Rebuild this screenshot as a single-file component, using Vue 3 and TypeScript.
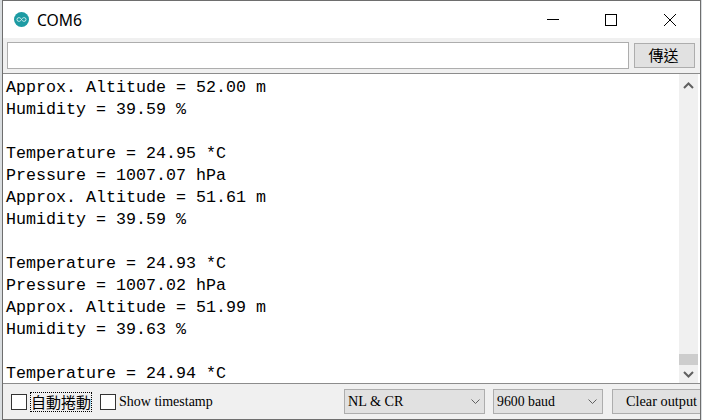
<script setup lang="ts">
const lines: string[] = [
  'Approx. Altitude = 52.00 m',
  'Humidity = 39.59 %',
  '',
  'Temperature = 24.95 *C',
  'Pressure = 1007.07 hPa',
  'Approx. Altitude = 51.61 m',
  'Humidity = 39.59 %',
  '',
  'Temperature = 24.93 *C',
  'Pressure = 1007.02 hPa',
  'Approx. Altitude = 51.99 m',
  'Humidity = 39.63 %',
  '',
  'Temperature = 24.94 *C',
]
</script>

<template>
  <div class="desk">
    <div class="win">
      <header class="title">
        <svg class="logo" width="15" height="15" viewBox="0 0 16 16">
          <circle cx="8" cy="8" r="8" fill="#1d9ba3" />
          <path d="M8 8c-1-1.6-1.9-2-2.8-2a2 2 0 0 0 0 4c.9 0 1.8-.4 2.8-2zm0 0c1-1.6 1.9-2 2.8-2a2 2 0 0 1 0 4c-.9 0-1.8-.4-2.8-2z" fill="none" stroke="#d8eff0" stroke-width="1" />
        </svg>
        <span class="name">COM6</span>
        <div class="controls">
          <svg width="12" height="12" viewBox="0 0 12 12"><path d="M0 5.5h12" stroke="#000" stroke-width="1" /></svg>
          <svg width="12" height="12" viewBox="0 0 12 12"><rect x=".5" y=".5" width="11" height="11" fill="none" stroke="#000" /></svg>
          <svg class="x" width="12" height="12" viewBox="0 0 12 12"><path d="M0 0l12 12M12 0L0 12" stroke="#000" stroke-width="1" /></svg>
        </div>
      </header>

      <div class="send">
        <input class="field" type="text" />
        <button class="sendbtn">傳送</button>
      </div>

      <div class="output">
        <div class="text">
          <div v-for="(l, i) in lines" :key="i" class="line">{{ l }}</div>
        </div>
        <div class="scroll">
          <svg class="arrow up" width="11" height="7" viewBox="0 0 11 7"><path d="M1 6l4.5-4.5L10 6" fill="none" stroke="#606060" stroke-width="2" /></svg>
          <div class="track"><div class="thumb"></div></div>
          <svg class="arrow" width="11" height="7" viewBox="0 0 11 7"><path d="M1 1l4.5 4.5L10 1" fill="none" stroke="#606060" stroke-width="2" /></svg>
        </div>
      </div>

      <footer class="bar">
        <label class="check"><span class="box"></span><span class="zh focus">自動捲動</span></label>
        <label class="check second"><span class="box"></span><span class="serif">Show timestamp</span></label>
        <div class="sel sel1"><span>NL &amp; CR</span><svg width="9" height="5" viewBox="0 0 9 5"><path d="M.5 .5l4 4 4-4" fill="none" stroke="#606060" /></svg></div>
        <div class="sel sel2"><span>9600 baud</span><svg width="9" height="5" viewBox="0 0 9 5"><path d="M.5 .5l4 4 4-4" fill="none" stroke="#606060" /></svg></div>
        <div class="clear"><span>Clear output</span></div>
      </footer>
    </div>
  </div>
</template>

<style>
html, body { margin: 0; padding: 0; background: #fff; overflow: hidden; }
</style>

<style scoped>
.desk {
  width: 702px;
  height: 420px;
  box-sizing: border-box;
  padding: 0 0 0 2px;
  background: #d9dde0;
}
.win {
  width: 699px;
  height: 420px;
  box-sizing: border-box;
  border: 1px solid #6e6e6e;
  background: #f0f0f0;
  display: flex;
  flex-direction: column;
}
.title {
  height: 37px;
  flex: none;
  background: #fff;
  display: flex;
  align-items: center;
  padding: 0 24px 0 11px;
  font-family: "Noto Sans", "Liberation Sans", sans-serif;
}
.logo { flex: none; }
.name { margin-left: 8px; font-size: 15.7px; color: #000; }
.controls { margin-left: auto; display: flex; gap: 46px; }
.x { margin-left: 1px; }
.send {
  height: 36px;
  flex: none;
  box-sizing: border-box;
  display: flex;
  align-items: flex-start;
  padding: 4px 0 0 4px;
  border-bottom: 1px solid #8c8c8c;
}
.field {
  width: 622px;
  height: 27px;
  box-sizing: border-box;
  border: 1px solid #adadad;
  background: #fff;
  padding: 0;
  outline: none;
}
.sendbtn {
  margin: 1px 0 0 5px;
  width: 61px;
  height: 25px;
  box-sizing: border-box;
  border: 1px solid #adadad;
  background: #e1e1e1;
  padding: 0 2px 2px 0;
  font: 15px/20px "Noto Sans CJK TC", sans-serif;
  color: #000;
}
.output {
  height: 309px;
  flex: none;
  display: flex;
  background: #fff;
  overflow: hidden;
}
.text {
  flex: 1;
  padding: 3px 0 0 3px;
  font: 16.67px/22px "Liberation Mono", monospace;
  color: #000;
  white-space: pre;
  overflow: hidden;
}
.line { height: 22px; }
.scroll {
  width: 19px;
  flex: none;
  margin-right: 2px;
  background: #f0f0f0;
  display: flex;
  flex-direction: column;
  align-items: center;
}
.arrow { flex: none; margin: 6px 0 5px; }
.arrow.up { margin: 8px 0 5px; }
.track { flex: 1; width: 100%; display: flex; flex-direction: column; justify-content: flex-end; }
.thumb { height: 11px; background: #cdcdcd; }
.bar {
  flex: 1;
  box-sizing: border-box;
  border-top: 1px solid #8c8c8c;
  display: flex;
  align-items: center;
  padding-left: 8px;
  font-family: "Liberation Serif", serif;
  color: #000;
}
.check { display: flex; align-items: center; }
.box {
  width: 14px;
  height: 14px;
  border: 1px solid #333;
  background: #fff;
  flex: none;
}
.zh {
  margin-left: 4px;
  font: 15px/18px "Noto Sans CJK TC", sans-serif;
}
.focus { outline: 1px dotted #000; outline-offset: 0; }
.second { margin-left: 9px; }
.serif { margin-left: 3px; font-size: 14px; }
.sel {
  box-sizing: border-box;
  height: 25px;
  border: 1px solid #adadad;
  background: #e1e1e1;
  display: flex;
  align-items: center;
  justify-content: space-between;
  padding: 0 4px 0 3px;
  font-size: 14.2px;
}
.sel1 { width: 141px; margin-left: auto; }
.sel2 { width: 110px; margin-left: 8px; padding-right: 5px; font-size: 13.8px; }
.clear {
  box-sizing: border-box;
  width: 88px;
  height: 25px;
  margin-left: 9px;
  border: 1px solid #adadad;
  border-right: none;
  background: #e1e1e1;
  display: flex;
  align-items: center;
  padding-left: 13px;
  font-size: 14.3px;
  white-space: nowrap;
  overflow: hidden;
}
</style>
